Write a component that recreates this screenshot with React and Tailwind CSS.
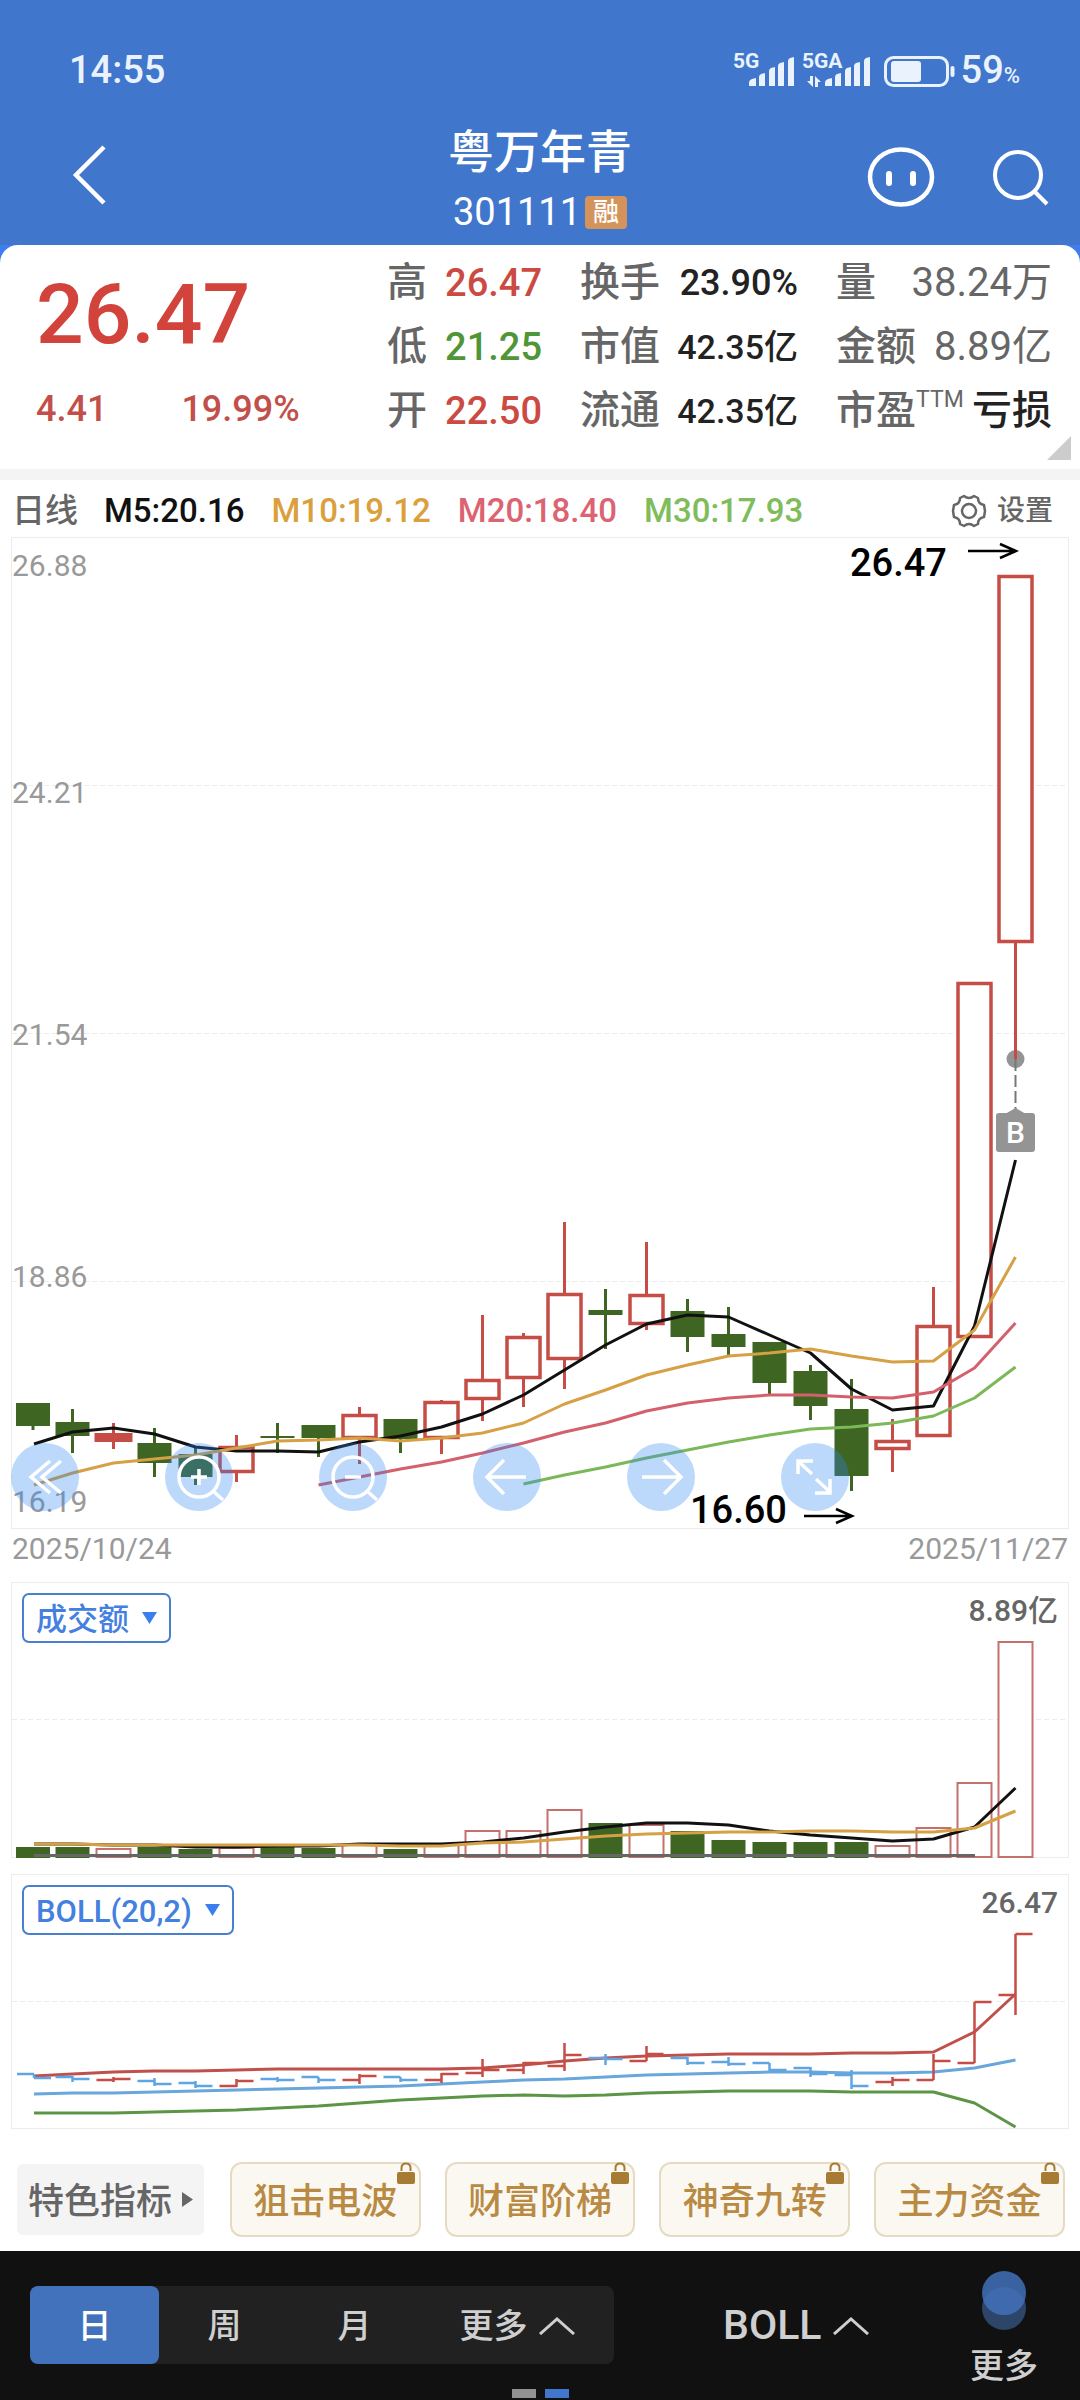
import React, { useState } from "react";

const STEP = 41;
const xAt = (i) => (i === 0 ? 34 : 31.5 + STEP * i);
const BAR = 34;

const RED = "#c64c46";
const GREEN = "#3f6522";

// direction, body top, body bottom, high, low
const candles = [
  ["d", 866, 889, 866, 893],
  ["d", 885, 899, 872, 916],
  ["u", 897, 904, 886, 912],
  ["d", 906, 926, 891, 940],
  ["d", 917, 940, 910, 948],
  ["u", 909, 936, 898, 945],
  ["d", 899, 901, 886, 916],
  ["d", 888, 901, 888, 920],
  ["u", 877, 902, 870, 927],
  ["d", 882, 902, 882, 916],
  ["u", 864, 902, 863, 917],
  ["u", 842, 863, 778, 884],
  ["u", 799, 842, 796, 870],
  ["u", 756, 823, 685, 852],
  ["d", 773, 778, 752, 812],
  ["u", 757, 788, 705, 793],
  ["d", 774, 800, 762, 815],
  ["d", 797, 810, 770, 818],
  ["d", 805, 846, 805, 857],
  ["d", 834, 869, 828, 883],
  ["d", 872, 939, 842, 954],
  ["u", 903, 913, 882, 935],
  ["u", 788, 900, 750, 900],
  ["u", 445, 801, 445, 801],
  ["u", 38, 406, 38, 522],
];

const ma5 = [907, 895, 891, 897, 910, 914, 914, 915, 905, 899, 890, 877, 858, 833, 808, 787, 778, 780, 798, 816, 852, 873, 869, 789, 623];
const ma10 = [948, 936, 926, 922, 918, 911, 904, 903, 901, 904, 901, 896, 886, 867, 853, 838, 828, 819, 816, 812, 819, 825, 824, 793, 720];
const ma20 = [948, 940, 932, 925, 916, 906, 895, 886, 874, 866, 861, 858, 858, 860, 861, 855, 831, 786];
const ma30 = [947, 938, 930, 921, 913, 905, 898, 892, 890, 886, 879, 861, 830];

const volumes = [265, 265, 266, 265, 267, 265, 265, 266, 262, 267, 262, 248, 248, 227, 241, 242, 249, 258, 260, 260, 260, 263, 245, 200, 59];
const vol5 = [262, 262, 263, 263, 265, 265, 264, 264, 262, 262, 262, 260, 256, 250, 245, 241, 241, 243, 249, 253, 256, 259, 257, 245, 206];
const vol10 = [262, 262, 263, 263, 263, 263, 263, 263, 263, 264, 264, 261, 260, 257, 254, 252, 251, 250, 250, 249, 249, 250, 250, 246, 229];

// open, close, high, low
const ohlc = [
  [200, 204, 200, 204], [203, 205, 202, 208], [206, 205, 203, 208], [207, 210, 204, 212], [209, 212, 207, 214],
  [212, 207, 205, 213], [205, 206, 203, 208], [203, 206, 203, 209], [206, 202, 200, 210], [203, 206, 203, 208],
  [206, 200, 199, 209], [199, 196, 185, 203], [196, 189, 188, 200], [192, 181, 169, 197], [184, 185, 180, 191],
  [187, 180, 172, 187], [184, 189, 183, 191], [188, 190, 183, 192], [189, 196, 189, 197], [194, 200, 193, 203],
  [201, 212, 196, 215], [208, 206, 203, 212], [206, 187, 180, 206], [189, 128, 128, 189], [121, 60, 60, 141],
];
const bollUpper = [202, 200, 198, 197, 197, 196, 195, 195, 195, 195, 195, 194, 191, 187, 184, 182, 181, 180, 180, 180, 179, 179, 178, 158, 120];
const bollMid = [220, 219, 219, 218, 217, 216, 215, 214, 213, 212, 210, 208, 206, 205, 203, 201, 200, 199, 198, 198, 199, 199, 198, 194, 186];
const bollLower = [239, 239, 239, 238, 237, 236, 234, 232, 229, 226, 224, 222, 221, 222, 221, 219, 218, 217, 217, 217, 218, 218, 218, 229, 253];

function Line({ ys, color, start = 0, width = 3 }) {
  const points = ys.map((y, i) => `${xAt(i + start)},${y}`).join(" ");
  return <polyline points={points} fill="none" stroke={color} strokeWidth={width} strokeLinejoin="round" />;
}

function Frame({ height, grid }) {
  return (
    <g stroke="#ececec" strokeWidth="1" fill="none">
      <rect x="11.5" y="0.5" width="1057" height={height - 1} />
      {grid.map((y) => (
        <line key={y} x1="12" x2="1068" y1={y + 0.5} y2={y + 0.5} strokeDasharray="5 3" />
      ))}
    </g>
  );
}

function Arrow({ x, y }) {
  return (
    <path d={`M${x - 48} ${y}H${x}M${x - 16} ${y - 7}L${x} ${y}L${x - 16} ${y + 7}`} fill="none" stroke="#000" strokeWidth="2.5" />
  );
}

function StatusIcons() {
  const bars = (x) => (
    <g>
      <path d={`M${x} 36v-3q0-3 3-4l4-1v8z`} />
      <path d={`M${x + 10} 36v-9q0-2 2-3l4-1v13z`} />
      <path d={`M${x + 20} 36v-15q0-2 2-3l4-1v19z`} />
      <path d={`M${x + 29} 36v-20q0-2 2-3l4-1v24z`} />
      <path d={`M${x + 39} 36v-25q0-2 2-3l4-1v29z`} />
    </g>
  );
  return (
    <svg viewBox="0 0 224 40" className="h-[40px] w-[224px]" fill="#eaf2fd" aria-hidden="true">
      <text x="0" y="18" fontSize="21" fontWeight="700">5G</text>
      {bars(16)}
      <text x="69" y="18" fontSize="21" fontWeight="700">5GA</text>
      <path d="M77 26h3v11l-6-6h3zM82 37v-11l6 6h-3v5z" />
      {bars(92)}
      <rect x="152.500" y="7.500" width="62" height="28" rx="8" fill="none" stroke="#eaf2fd" strokeWidth="3" />
      <rect x="158" y="11" width="30" height="21" rx="3" />
      <rect x="217.500" y="16" width="4" height="11" rx="2" />
    </svg>
  );
}

function Header() {
  return (
    <header className="bg-[#4077cc] text-white">
      <div className="flex h-[100px] items-end justify-between pr-[60px] pb-[10px] pl-[69px] text-[#eaf2fd]">
        <span className="text-[38px] leading-[40px] font-medium">14:55</span>
        <div className="flex items-end gap-1">
          <StatusIcons />
          <p className="text-[38px] leading-[40px] font-medium">
            59<span className="text-[22px] leading-none">%</span>
          </p>
        </div>
      </div>
      <div className="grid h-[145px] grid-cols-3 pt-[24px]">
        <button aria-label="返回" className="ml-[68px] flex h-[60px] w-[44px] items-center self-start pt-[42px]">
          <svg viewBox="0 0 44 60" className="h-[60px] w-[44px] shrink-0" fill="none" stroke="#fff" strokeWidth="4.500">
            <path d="M36 2L8 30L36 58" />
          </svg>
        </button>
        <div className="flex flex-col items-center">
          <h1 className="text-[46px] leading-[56px] font-medium">粤万年青</h1>
          <div className="flex h-[64px] items-center gap-1">
            <span className="text-[38px] leading-[64px]">301111</span>
            <span className="rounded-[4px] bg-[#d4935a] px-2 text-[26px] leading-[33px] font-medium">融</span>
          </div>
        </div>
        <div className="flex items-start justify-end gap-[56px] pt-[20px] pr-[29px]">
          <button aria-label="智能助手">
            <svg viewBox="0 0 68 66" className="h-[66px] w-[68px]" fill="none" stroke="#fff">
              <ellipse cx="34" cy="33" rx="31" ry="27.500" strokeWidth="4.500" />
              <path d="M22 30v9M46 30v9" strokeWidth="6" strokeLinecap="round" />
            </svg>
          </button>
          <button aria-label="搜索">
            <svg viewBox="0 0 60 66" className="h-[66px] w-[60px]" fill="none" stroke="#fff" strokeWidth="4">
              <circle cx="27" cy="31" r="23" />
              <path d="M43 47L56 60" />
            </svg>
          </button>
        </div>
      </div>
    </header>
  );
}

function Stat({ label, sup, value, tone, size = "text-[38px]" }) {
  return (
    <div className="flex items-center justify-between">
      <dt className="flex text-[40px] leading-[64px] font-medium whitespace-nowrap text-[#666]">
        {label}
        {sup && <sup className="top-0 pt-[9px] text-[23px] leading-none font-normal">{sup}</sup>}
      </dt>
      <dd className={`${size} ${tone} leading-[64px] whitespace-nowrap`}>{value}</dd>
    </div>
  );
}

function Quote() {
  return (
    <div className="bg-[#3d7df0]">
      <section className="relative flex h-[224px] justify-between rounded-t-[18px] bg-white pr-[28px] pl-[36px]">
        <div className="pt-[20px] text-[#d1433b]">
          <p className="text-[84px] leading-[100px] font-medium">26.47</p>
          <p className="flex gap-[74px] pt-[20px] text-[36px] leading-[48px] font-medium text-[#c24f49]">
            <span>4.41</span>
            <span>19.99%</span>
          </p>
        </div>
        <div className="flex gap-[38px] pt-[6px]">
          <dl className="w-[155px]">
            <Stat label="高" value="26.47" tone="text-[#cb4a42] font-medium" />
            <Stat label="低" value="21.25" tone="text-[#4f9638] font-medium" />
            <Stat label="开" value="22.50" tone="text-[#cb4a42] font-medium" />
          </dl>
          <dl className="w-[218px]">
            <Stat label="换手" value="23.90%" tone="text-[#222] font-medium" size="text-[36px]" />
            <Stat label="市值" value="42.35亿" tone="text-[#222] font-medium" size="text-[34px]" />
            <Stat label="流通" value="42.35亿" tone="text-[#222] font-medium" size="text-[34px]" />
          </dl>
          <dl className="w-[216px]">
            <Stat label="量" value="38.24万" tone="text-[#666]" size="text-[40px]" />
            <Stat label="金额" value="8.89亿" tone="text-[#666]" size="text-[40px]" />
            <Stat label="市盈" sup="TTM" value="亏损" tone="text-[#222] font-medium" size="text-[40px]" />
          </dl>
        </div>
        <svg viewBox="0 0 24 24" className="absolute right-[9px] bottom-[9px] size-6" fill="#ccc" aria-hidden="true">
          <path d="M24 0V24H0Z" />
        </svg>
      </section>
    </div>
  );
}

function Averages() {
  return (
    <div className="flex h-[57px] items-center pt-1 pr-[27px] pl-[12px] text-[33px] font-medium">
      <span className="text-[#666]">日线</span>
      <span className="ml-[26px] text-[#111]">M5:20.16</span>
      <span className="ml-[27px] text-[#d9a03d]">M10:19.12</span>
      <span className="ml-[27px] text-[#dc6371]">M20:18.40</span>
      <span className="ml-[27px] text-[#7fbc5b]">M30:17.93</span>
      <button className="ml-auto flex items-center gap-[10px] text-[28px] font-medium text-[#666]">
        <svg viewBox="0 0 36 36" className="size-[36px]" fill="none" stroke="#666" strokeWidth="2.500" strokeLinejoin="round">
          <path d="M13 3Q18 7 23 3L27 5Q27 11 33 12L34 18L33 24Q27 25 27 31L23 33Q18 29 13 33L9 31Q9 25 3 24L2 18L3 12Q9 11 9 5Z" />
          <circle cx="18" cy="18" r="7" />
        </svg>
        设置
      </button>
    </div>
  );
}

const tools = [
  ["最早", "M39 18L20 34L39 50M50 18L31 34L50 50"],
  ["放大", "M54 34A20 20 0 1 1 14 34A20 20 0 1 1 54 34M48 48L58 57M26 34H42M34 26V42"],
  ["缩小", "M54 34A20 20 0 1 1 14 34A20 20 0 1 1 54 34M48 48L58 57M26 34H42"],
  ["左移", "M31 17L14 34L31 51M14 34H53"],
  ["右移", "M37 17L54 34L37 51M54 34H15"],
  ["全屏", "M17 31V18H32M18 19L31 31M35 36L48 48M34 50H49V36"],
];

function PriceChart() {
  return (
    <section className="relative">
      <svg viewBox="0 0 1080 992" className="block w-full overflow-visible" role="img" aria-label="日线K线图">
        <Frame height={992} grid={[248, 496, 744]} />
        {candles.map(([dir, top, bottom, high, low], i) => {
          const x = i === 0 ? 33 : xAt(i);
          const color = dir === "u" ? RED : GREEN;
          return (
            <g key={i}>
              <path d={`M${x} ${high}V${top}M${x} ${bottom}V${low}`} stroke={color} strokeWidth="3" />
              {dir === "u" ? (
                <rect x={x - 16.5} y={top + 1.5} width="33" height={bottom - top - 3} fill="#fff" stroke={color} strokeWidth={i === 2 ? 5 : 3.5} />
              ) : (
                <rect x={x - BAR / 2} y={top} width={BAR} height={bottom - top} fill={color} />
              )}
            </g>
          );
        })}
        <Line ys={ma5} color="#111" />
        <Line ys={ma10} color="#d6a044" />
        <Line ys={ma20} color="#d4606c" start={7} />
        <Line ys={ma30} color="#7db858" start={12} />
        <circle cx="1015.5" cy="522" r="9" fill="#949494" />
        <path d="M1015.5 500V522" stroke={RED} strokeWidth="3" />
        <path d="M1015.5 522V572" stroke="#777" strokeWidth="2" strokeDasharray="12 4" />
        <path d="M1005 577L1015.500 571L1026 577Z" fill="#949494" />
        <rect x="996" y="576" width="39" height="39" rx="3" fill="#949494" />
        <text x="1015.5" y="606" textAnchor="middle" fontSize="30" fontWeight="500" fill="#fff">B</text>
        <g fontSize="30" fill="#999">
          <text x="12" y="39">26.88</text>
          <text x="12" y="266">24.21</text>
          <text x="12" y="508">21.54</text>
          <text x="12" y="750">18.86</text>
          <text x="12" y="975">16.19</text>
        </g>
        <g fontSize="38" fontWeight="500" fill="#000">
          <text x="850" y="39">26.47</text>
          <text x="690" y="986">16.60</text>
        </g>
        <Arrow x={1016} y={14} />
        <Arrow x={852} y={979} />
      </svg>
      <div className="absolute bottom-[18px] left-[11px] flex gap-[86px]">
        {tools.map(([name, d]) => (
          <button key={name} aria-label={name} className="size-[68px] rounded-full bg-[#2f86f0]/32">
            <svg viewBox="0 0 68 68" className="size-full" fill="none" stroke="#fff" strokeWidth="3.500">
              <path d={d} />
            </svg>
          </button>
        ))}
      </div>
    </section>
  );
}

function IndicatorSelect({ label, options }) {
  const [value, setValue] = useState(options[0]);
  return (
    <div className="absolute top-[11px] left-[22px] flex items-center">
      <select
        aria-label={label}
        value={value}
        onChange={(e) => setValue(e.target.value)}
        className="field-sizing-content h-[50px] appearance-none rounded-[7px] border-2 border-[#4a7fce] bg-white pt-[3px] pr-[40px] pl-[12px] text-[31px] leading-[43px] font-medium text-[#4480df]"
      >
        {options.map((o) => (
          <option key={o}>{o}</option>
        ))}
      </select>
      <svg viewBox="0 0 15 12" className="pointer-events-none -ml-[29px] h-[12px] w-[15px]" fill="#3b7fee" aria-hidden="true">
        <path d="M0 0H15L7.500 12Z" />
      </svg>
    </div>
  );
}

function VolumeChart() {
  return (
    <section className="relative">
      <svg viewBox="0 0 1080 276" className="block w-full" role="img" aria-label="成交额图">
        <Frame height={276} grid={[137]} />
        {volumes.map((top, i) => {
          const x = (i === 0 ? 33 : xAt(i)) - BAR / 2;
          return candles[i][0] === "u" ? (
            <rect key={i} x={x} y={top + 1} width={BAR} height={274 - top} fill="#fff" stroke="#c4716d" strokeWidth="2" />
          ) : (
            <rect key={i} x={x} y={top} width={BAR} height={276 - top} fill={GREEN} />
          );
        })}
        <path d="M34 273.500H975" stroke="#666" strokeWidth="3" />
        <Line ys={vol5} color="#111" />
        <Line ys={vol10} color="#d6a044" />
        <text x="1058" y="39" textAnchor="end" fontSize="30" fontWeight="500" fill="#666">8.89亿</text>
      </svg>
      <IndicatorSelect label="副图指标一" options={["成交额", "成交量"]} />
    </section>
  );
}

function BollChart() {
  return (
    <section className="relative mt-4">
      <svg viewBox="0 0 1080 255" className="block w-full" role="img" aria-label="BOLL指标图">
        <Frame height={255} grid={[127]} />
        <Line ys={bollUpper} color="#c0504b" />
        <Line ys={bollMid} color="#68a6dc" />
        <Line ys={bollLower} color="#5c9545" />
        {ohlc.map(([o, c, h, l], i) => (
          <path
            key={i}
            d={`M${xAt(i) - 17} ${o}H${xAt(i)}M${xAt(i)} ${h}V${l}M${xAt(i)} ${c}H${xAt(i) + 17}`}
            stroke={candles[i][0] === "u" ? RED : "#5fa5e4"}
            strokeWidth="2.5"
          />
        ))}
        <text x="1058" y="39" textAnchor="end" fontSize="30" fontWeight="500" fill="#666">26.47</text>
      </svg>
      <IndicatorSelect label="副图指标二" options={["BOLL(20,2)", "MACD"]} />
    </section>
  );
}

function Features() {
  return (
    <div className="flex gap-[24px] px-[15px] pt-[33px] pb-[14px] text-[36px] font-medium whitespace-nowrap">
      <button className="flex h-[75px] flex-1 items-center justify-center gap-[10px] rounded-[8px] border-2 border-white bg-[#f4f4f4] pt-1 text-[#666]">
        特色指标
        <svg viewBox="0 0 11 15" className="mb-1 h-[15px] w-[11px]" fill="#666" aria-hidden="true">
          <path d="M0 0L11 7.500L0 15Z" />
        </svg>
      </button>
      {["狙击电波", "财富阶梯", "神奇九转", "主力资金"].map((name) => (
        <button key={name} className="relative h-[75px] flex-1 rounded-[12px] border-2 border-[#e6dac3] bg-[#fbf8f2] pt-1 text-[#b88a44]">
          {name}
          <svg viewBox="0 0 18 22" className="absolute -top-[2px] right-[4px] h-[22px] w-[18px]" aria-hidden="true">
            <path d="M4.500 9V6Q4.500 1.500 9 1.500T13.500 6V9" fill="none" stroke="#a87b35" strokeWidth="2" />
            <rect y="10" width="18" height="12" rx="2" fill="#a87b35" />
          </svg>
        </button>
      ))}
    </div>
  );
}

function UpChevron() {
  return (
    <svg viewBox="0 0 38 18" className="h-[18px] w-[38px]" fill="none" stroke="#cfcfcf" strokeWidth="3" aria-hidden="true">
      <path d="M2 17L19 2L36 17" />
    </svg>
  );
}

function BottomBar() {
  return (
    <footer className="relative flex h-[149px] items-start bg-[#111] pl-[30px] text-[34px] font-medium text-[#cfcfcf]">
      <div className="mt-[35px] flex h-[78px] w-[584px] rounded-[8px] bg-[#212121]">
        <button className="w-[129px] rounded-[8px] bg-[#4272bb] pt-[2px] text-white">日</button>
        <button className="w-[131px] pt-[2px]">周</button>
        <button className="w-[129px] pt-[2px]">月</button>
        <button className="flex flex-1 items-center justify-center gap-[10px] pt-[2px] pl-[2px]">
          更多
          <UpChevron />
        </button>
      </div>
      <button className="mt-[35px] ml-[109px] flex h-[78px] items-center gap-[11px] pt-[2px] text-[41px]">
        BOLL
        <UpChevron />
      </button>
      <button className="mt-[19px] mr-[42px] ml-auto flex flex-col items-center">
        <svg viewBox="0 0 46 62" className="h-[62px] w-[46px]" aria-hidden="true">
          <circle cx="23" cy="38" r="22" fill="#2c4569" />
          <circle cx="23" cy="23" r="22" fill="#3a62a0" />
          <path d="M2.500 31A22 22 0 0 1 43.500 31A22 22 0 0 1 2.500 31Z" fill="#3f6bae" />
        </svg>
        <span className="pt-[10px] leading-[48px]">更多</span>
      </button>
      <div className="absolute inset-x-0 bottom-[2px] flex justify-center gap-[9px]">
        <span className="h-[9px] w-[24px] bg-[#929292]" />
        <span className="h-[9px] w-[24px] bg-[#4077cc]" />
      </div>
    </footer>
  );
}

export default function App() {
  return (
    <main className="w-full bg-white font-['Roboto','Noto_Sans_CJK_SC',sans-serif]">
      <Header />
      <Quote />
      <div className="h-[11px] bg-[#f4f4f4]" />
      <Averages />
      <PriceChart />
      <div className="flex h-[53px] justify-between px-[12px] pt-[2px] text-[30px] leading-[36px] text-[#999]">
        <time>2025/10/24</time>
        <time>2025/11/27</time>
      </div>
      <VolumeChart />
      <BollChart />
      <Features />
      <BottomBar />
    </main>
  );
}
